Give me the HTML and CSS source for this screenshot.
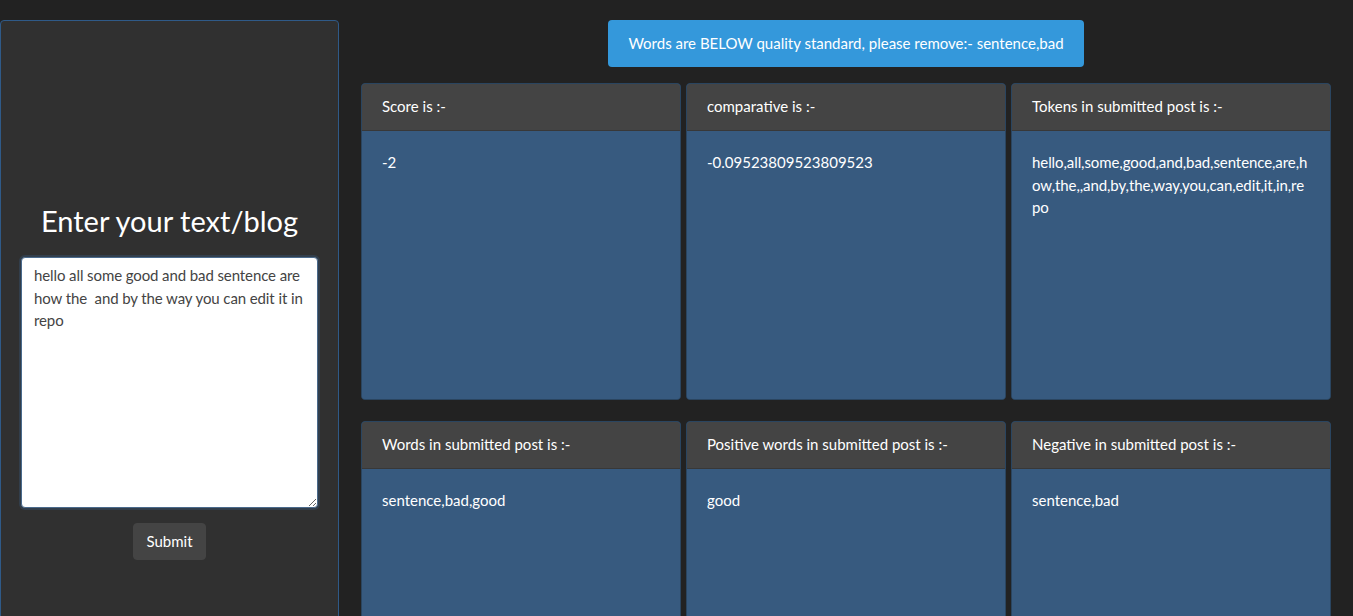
FILE: index.html
```html
<!DOCTYPE html>
<html lang="en">
<head>
<meta charset="utf-8">
<title>Sentiment</title>
<link rel="stylesheet" href="styles.css">
</head>
<body>
<div class="page">
  <aside class="editor">
    <h2 class="editor-title">Enter your text/blog</h2>
    <textarea class="editor-input" spellcheck="false">hello all some good and bad sentence are how the  and by the way you can edit it in repo</textarea>
    <button class="btn-submit" type="button">Submit</button>
  </aside>
  <main class="results">
    <div class="alert-row">
      <div class="alert-info">Words are BELOW quality standard, please remove:- sentence,bad</div>
    </div>
    <div class="card-grid">
      <section class="card">
        <div class="card-header">Score is :-</div>
        <div class="card-body">-2</div>
      </section>
      <section class="card">
        <div class="card-header">comparative is :-</div>
        <div class="card-body">-0.09523809523809523</div>
      </section>
      <section class="card">
        <div class="card-header">Tokens in submitted post is :-</div>
        <div class="card-body break">hello,all,some,good,and,bad,sentence,are,how,the,,and,by,the,way,you,can,edit,it,in,repo</div>
      </section>
    </div>
    <div class="card-grid second">
      <section class="card">
        <div class="card-header">Words in submitted post is :-</div>
        <div class="card-body">sentence,bad,good</div>
      </section>
      <section class="card">
        <div class="card-header">Positive words in submitted post is :-</div>
        <div class="card-body">good</div>
      </section>
      <section class="card">
        <div class="card-header">Negative in submitted post is :-</div>
        <div class="card-body">sentence,bad</div>
      </section>
    </div>
  </main>
</div>
</body>
</html>
```
FILE: styles.css
```css
* { box-sizing: border-box; }
html, body {
  margin: 0;
  padding: 0;
  background: #222222;
  color: #ffffff;
  font-family: Lato, "Liberation Sans", sans-serif;
  font-size: 15px;
  line-height: 1.5;
  overflow: hidden;
}
.page {
  display: flex;
  align-items: flex-start;
  height: 616px;
}
.editor {
  flex: 0 0 339px;
  width: 339px;
  margin-top: 20px;
  height: 720px;
  padding: 182px 20px 0;
  background: #303030;
  border: 1px solid #2f5a88;
  border-radius: 4px;
  display: flex;
  flex-direction: column;
  align-items: center;
}
.editor-title {
  margin: 0 0 18px;
  font-size: 29px;
  font-weight: 400;
  line-height: 36px;
  text-align: center;
}
.editor-input {
  display: block;
  width: 297px;
  height: 251px;
  padding: 6px 12px;
  font-family: inherit;
  font-size: 15px;
  line-height: 1.5;
  letter-spacing: -0.1px;
  color: #444444;
  background: #ffffff;
  border: 1px solid #4a6a8c;
  border-radius: 4px;
  box-shadow: 0 0 0 2px rgba(55, 90, 127, 0.35);
  outline: none;
  resize: vertical;
}
.btn-submit {
  margin-top: 15px;
  padding: 6px 12px;
  font-family: inherit;
  font-size: 15px;
  line-height: 1.5;
  color: #ffffff;
  background: #444444;
  border: 1px solid #444444;
  border-radius: 4px;
}
.results {
  flex: 1;
  padding: 20px 22px 0;
}
.alert-row {
  display: flex;
  justify-content: center;
  margin-bottom: 16px;
}
.alert-info {
  padding: 12px 20px;
  background: #3498db;
  border-radius: 4px;
  color: #ffffff;
  line-height: 1.5;
}
.card-grid {
  display: grid;
  grid-template-columns: repeat(3, 320px);
  gap: 5px;
}
.card-grid.second {
  margin-top: 21px;
}
.card {
  display: flex;
  flex-direction: column;
  height: 317px;
  border: 1px solid #2a4560;
  border-radius: 4px;
  overflow: hidden;
  background: #375a7f;
}
.card-header {
  padding: 11px 20px 13px;
  background: #444444;
  border-bottom: 1px solid #383838;
}
.card-body {
  flex: 1;
  padding: 20px;
  background: #375a7f;
}
.card-body.break {
  word-break: break-all;
  letter-spacing: -0.08px;
}
```
